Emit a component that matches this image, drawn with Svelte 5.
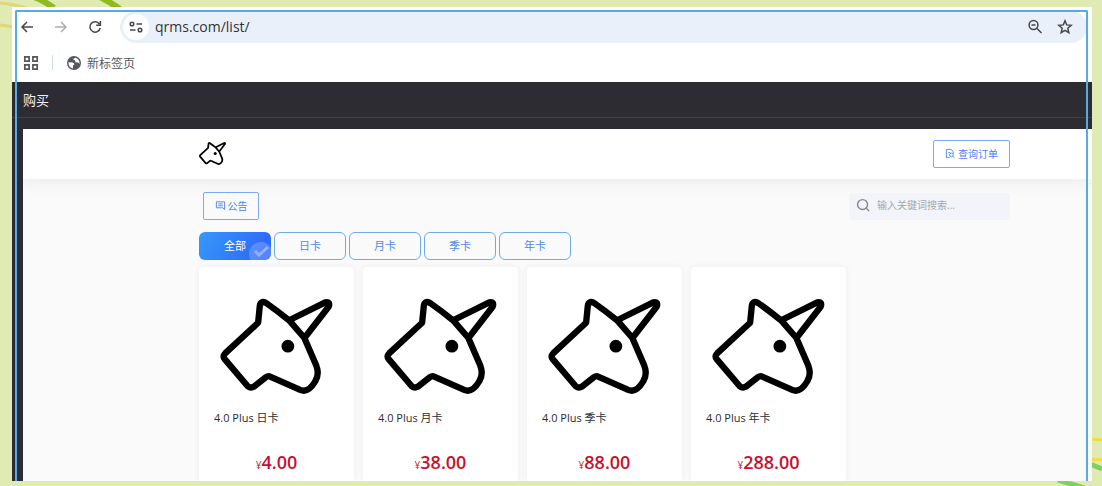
<script>
  const categories = ['全部', '日卡', '月卡', '季卡', '年卡'];

  const products = [
    { name: '4.0 Plus 日卡', price: '4.00' },
    { name: '4.0 Plus 月卡', price: '38.00' },
    { name: '4.0 Plus 季卡', price: '88.00' },
    { name: '4.0 Plus 年卡', price: '288.00' }
  ];

  let active = $state('全部');
  let keyword = $state('');
</script>

{#snippet unicorn(weight)}
  <svg class="unicorn" viewBox="78 98 338 290" fill="none" stroke="#000" stroke-width={weight} stroke-linecap="round" stroke-linejoin="round" aria-hidden="true">
    <path d="M192 172L197 122Q199 104 216 113Q250 137 285 165L330 217L366 300Q376 326 363 347Q342 383 318 373L228 333Q222 330 215 335L180 363Q170 369 161 362L92 281Q85 272 94 263Z" />
    <path d="M288 163L393 111Q409 108 403 124L334 213" />
    <circle cx="281" cy="242" r="19" fill="#000" stroke="none" />
  </svg>
{/snippet}

<div class="stage">
  <!-- Decorative backdrop stripes -->
  <svg class="deco deco-top" viewBox="0 0 130 60" aria-hidden="true">
    <path d="M0 3Q14 4 26 8M0 25L14 27" stroke="#e2d478" stroke-width="3" fill="none" />
    <path d="M34 -3Q43 0 54 8M100 -3Q110 2 120 9" stroke="#94b91f" stroke-width="6" fill="none" />
  </svg>
  <svg class="deco deco-bottom" viewBox="0 0 62 56" aria-hidden="true">
    <path d="M50 9L62 10M50 29L62 30" stroke="#f3dd3d" stroke-width="3" fill="none" />
    <path d="M50 34L62 39M18 50L44 58" stroke="#80cf62" stroke-width="5" fill="none" />
  </svg>

  <div class="browser">
    <div class="toolbar">
      <button class="icon-button" aria-label="Back">
        <svg viewBox="0 0 16 16"><path d="M14 8H3M8 3L3 8l5 5" /></svg>
      </button>
      <button class="icon-button muted" aria-label="Forward">
        <svg viewBox="0 0 16 16"><path d="M2 8h11M8 3l5 5-5 5" /></svg>
      </button>
      <button class="icon-button" aria-label="Reload">
        <svg viewBox="0 0 16 16"><path d="M12.4 5A5.2 5.2 0 1 0 13.2 9M13.4 2v4.2H9.2" /></svg>
      </button>
      <div class="address">
        <button class="site-info" aria-label="Site information">
          <svg viewBox="0 0 16 16"><circle cx="4" cy="5" r="1.8" /><path d="M8.5 5H14M2 11h5.5" /><circle cx="12" cy="11" r="1.8" /></svg>
        </button>
        <input class="url" type="text" value="qrms.com/list/" aria-label="Address" />
        <button class="icon-button" aria-label="Zoom out">
          <svg viewBox="0 0 16 16"><circle cx="6.5" cy="6" r="4.4" /><path d="M10 9.5l4.5 4.5M4.5 6h4" /></svg>
        </button>
        <button class="icon-button" aria-label="Bookmark">
          <svg viewBox="0 0 16 16"><path d="M8 1.8l1.7 4.1 4.5.4-3.4 2.9 1 4.4L8 11.3l-3.8 2.3 1-4.4-3.4-2.9 4.5-.4z" /></svg>
        </button>
      </div>
    </div>

    <nav class="bookmarks" aria-label="Bookmarks">
      <button class="icon-button apps" aria-label="Apps">
        <svg viewBox="0 0 16 16"><path d="M1.800 1.800h4.300v4.300H1.800zM9.900 1.800h4.300v4.300H9.900zM1.800 9.900h4.300v4.300H1.800zM9.900 9.900h4.300v4.300H9.900z" /></svg>
      </button>
      <span class="divider"></span>
      <a class="bookmark" href="#new">
        <svg viewBox="0 0 16 16"><circle cx="8" cy="8" r="7" fill="#55585c" /><path d="M2.4 7.200L6.500 7.600Q8.400 8 8.500 9.600L7 10.500V13.400Q2.600 12.600 2.400 7.200zM9.600 2.700Q7 3 7.200 4.600L9 5.300 9.400 7.300 12.200 7.600 13.500 9Q14 4.500 9.600 2.700z" fill="#fff" /></svg>
        新标签页
      </a>
    </nav>

    <div class="window">
      <h1 class="window-title">购买</h1>

      <div class="page">
        <header class="page-header">
          <a class="logo" href="#home" aria-label="Home">{@render unicorn(22)}</a>
          <button class="outline-button">
            <svg viewBox="0 0 12 12"><path d="M5 10.500H1.500v-9H6.500L9 4v2M3.500 5h2" /><circle cx="7" cy="7.500" r="2" /><path d="M8.500 9l2 2" /></svg>
            查询订单
          </button>
        </header>

        <main>
          <div class="tools">
            <button class="outline-button notice">
              <svg viewBox="0 0 12 12"><path d="M1.500 2h9v8.500L8.500 8.500h-7zM3.500 4.300h5M3.500 6.300h5" /></svg>
              公告
            </button>
            <label class="search">
              <svg viewBox="0 0 16 16"><circle cx="7" cy="7" r="5.300" /><path d="M11 11l3 3" /></svg>
              <input type="text" placeholder="输入关键词搜索..." aria-label="搜索" bind:value={keyword} />
            </label>
          </div>

          <div class="categories">
            {#each categories as category}
              <button class="category" class:active={active === category} onclick={() => (active = category)}>
                {category}
                {#if active === category}
                  <svg class="check" viewBox="0 0 22 18" aria-hidden="true">
                    <circle cx="12" cy="12" r="12" fill="#fff" opacity="0.2" />
                    <path d="M6 9l4 4 9-8" fill="none" stroke="#fff" stroke-width="3" opacity="0.35" />
                  </svg>
                {/if}
              </button>
            {/each}
          </div>

          <div class="products">
            {#each products as product}
              <article class="card">
                {@render unicorn(19)}
                <h2>{product.name}</h2>
                <p class="price"><span>¥</span>{product.price}</p>
              </article>
            {/each}
          </div>
        </main>
      </div>
    </div>

    <div class="outline"></div>
  </div>
</div>

<style>
  .stage {
    position: relative;
    display: flex;
    flex-direction: column;
    box-sizing: border-box;
    min-height: 100vh;
    padding: 7px 10px 5px 12px;
    overflow: hidden;
    background: #e0eab3;
    font-family: "Open Sans", "Noto Sans CJK SC", sans-serif;
  }

  .stage * {
    box-sizing: border-box;
  }

  button {
    border: none;
    background: none;
    padding: 0;
    font: inherit;
    cursor: pointer;
  }

  a {
    color: inherit;
    text-decoration: none;
  }

  .deco {
    position: absolute;
  }

  .deco-top {
    top: 0;
    left: 0;
    width: 130px;
  }

  .deco-bottom {
    right: 0;
    bottom: 0;
    width: 62px;
  }

  .browser {
    position: relative;
    display: flex;
    flex: 1;
    flex-direction: column;
    background: #fff;
  }

  .outline {
    position: absolute;
    inset: 3px 4px 0 3px;
    border: 2px solid #58a9e8;
    border-bottom: none;
    border-radius: 2px 2px 0 0;
    pointer-events: none;
  }

  .toolbar {
    display: flex;
    align-items: center;
    gap: 18px;
    height: 36px;
    padding: 4px 5px 0 7px;
  }

  .icon-button {
    display: flex;
    width: 16px;
    height: 16px;
  }

  .icon-button svg,
  .site-info svg {
    width: 16px;
    height: 16px;
    fill: none;
    stroke: #44474b;
    stroke-width: 1.5;
  }

  .icon-button.muted svg {
    stroke: #aaadb0;
  }

  .icon-button.apps svg {
    stroke: #55585c;
    stroke-width: 1.7;
  }

  .address {
    display: flex;
    flex: 1;
    align-items: center;
    gap: 14px;
    height: 32px;
    margin-left: -1px;
    padding: 0 14px 0 3px;
    border-radius: 16px;
    background: #eaf0f9;
  }

  .site-info {
    display: flex;
    align-items: center;
    justify-content: center;
    width: 26px;
    height: 26px;
    border-radius: 50%;
    background: #fff;
  }

  .url {
    flex: 1;
    min-width: 0;
    margin-left: -8px;
    padding: 0 0 2px;
    border: none;
    outline: none;
    background: transparent;
    color: #303338;
    font: inherit;
    font-size: 14px;
  }

  .bookmarks {
    display: flex;
    align-items: center;
    gap: 13px;
    height: 39px;
    padding: 0 11px;
    color: #55585c;
    font-size: 12px;
  }

  .divider {
    width: 1px;
    height: 15px;
    background: #c5ddf6;
  }

  .bookmark {
    display: flex;
    align-items: center;
    gap: 5px;
  }

  .bookmark svg {
    width: 16px;
    height: 16px;
  }

  .window {
    display: flex;
    flex: 1;
    flex-direction: column;
    padding-left: 11px;
    background: #2d2c32;
  }

  .window-title {
    height: 36px;
    margin: 0 0 11px -11px;
    padding-left: 11px;
    border-bottom: 1px solid #414048;
    color: #f0f0f2;
    font-size: 13px;
    font-weight: 400;
    line-height: 36px;
  }

  .page {
    flex: 1;
    overflow: hidden;
    background: #fafafa;
  }

  .page-header {
    display: flex;
    align-items: center;
    justify-content: space-between;
    height: 50px;
    padding: 0 82px 0 176px;
    background: #fff;
    box-shadow: 0 4px 16px rgba(0, 0, 0, 0.06);
  }

  .unicorn {
    display: block;
    width: 100%;
  }

  .logo {
    width: 27px;
  }

  .outline-button {
    display: flex;
    align-items: center;
    justify-content: center;
    gap: 2px;
    width: 77px;
    height: 28px;
    padding-bottom: 2px;
    border: 1px solid #7aaaf5;
    border-radius: 2px;
    background: #fff;
    color: #4a83ee;
    font-size: 10px;
  }

  .outline-button svg {
    width: 11px;
    height: 11px;
    fill: none;
    stroke: currentColor;
  }

  .notice {
    width: 56px;
    background: transparent;
  }

  main {
    padding: 12px 82px 0 176px;
  }

  .tools {
    display: flex;
    align-items: center;
    justify-content: space-between;
    height: 30px;
    padding-left: 4px;
  }

  .search {
    display: flex;
    align-items: center;
    gap: 6px;
    width: 161px;
    height: 27px;
    padding: 0 7px 2px;
    border-radius: 4px;
    background: #f2f4f9;
  }

  .search svg {
    width: 15px;
    height: 15px;
    fill: none;
    stroke: #85888e;
    stroke-width: 1.5;
  }

  .search input {
    flex: 1;
    min-width: 0;
    padding: 0;
    border: none;
    outline: none;
    background: transparent;
    color: #555;
    font: inherit;
    font-size: 10px;
  }

  .search input::placeholder {
    color: #a5a8ae;
  }

  .categories {
    display: flex;
    gap: 3px;
    margin: 11px 0 7px;
  }

  .category {
    position: relative;
    width: 72px;
    height: 28px;
    padding-bottom: 2px;
    overflow: hidden;
    border: 1px solid #6fa9e8;
    border-radius: 6px;
    color: #4f8be8;
    font-size: 11px;
  }

  .category.active {
    border: none;
    background: linear-gradient(120deg, #3898fb, #2c62f8);
    color: #fff;
  }

  .check {
    position: absolute;
    right: 0;
    bottom: 0;
    width: 22px;
  }

  .products {
    display: grid;
    grid-template-columns: repeat(5, 1fr);
    gap: 9px;
  }

  .card {
    padding: 31px 15px 4px;
    border-radius: 4px 4px 0 0;
    background: #fff;
    box-shadow: 0 0 6px rgba(0, 0, 0, 0.06);
  }

  .card .unicorn {
    width: 113px;
    margin: 0 auto;
  }

  .card h2 {
    margin: 13px 0 0;
    color: #2c2f33;
    font-size: 11px;
    font-weight: 400;
    line-height: 20px;
  }

  .price {
    margin: 22px 0 0;
    color: #c8102e;
    font-size: 18px;
    font-weight: 600;
    line-height: 24px;
    text-align: center;
  }

  .price span {
    font-size: 10px;
    font-weight: 400;
  }
</style>
